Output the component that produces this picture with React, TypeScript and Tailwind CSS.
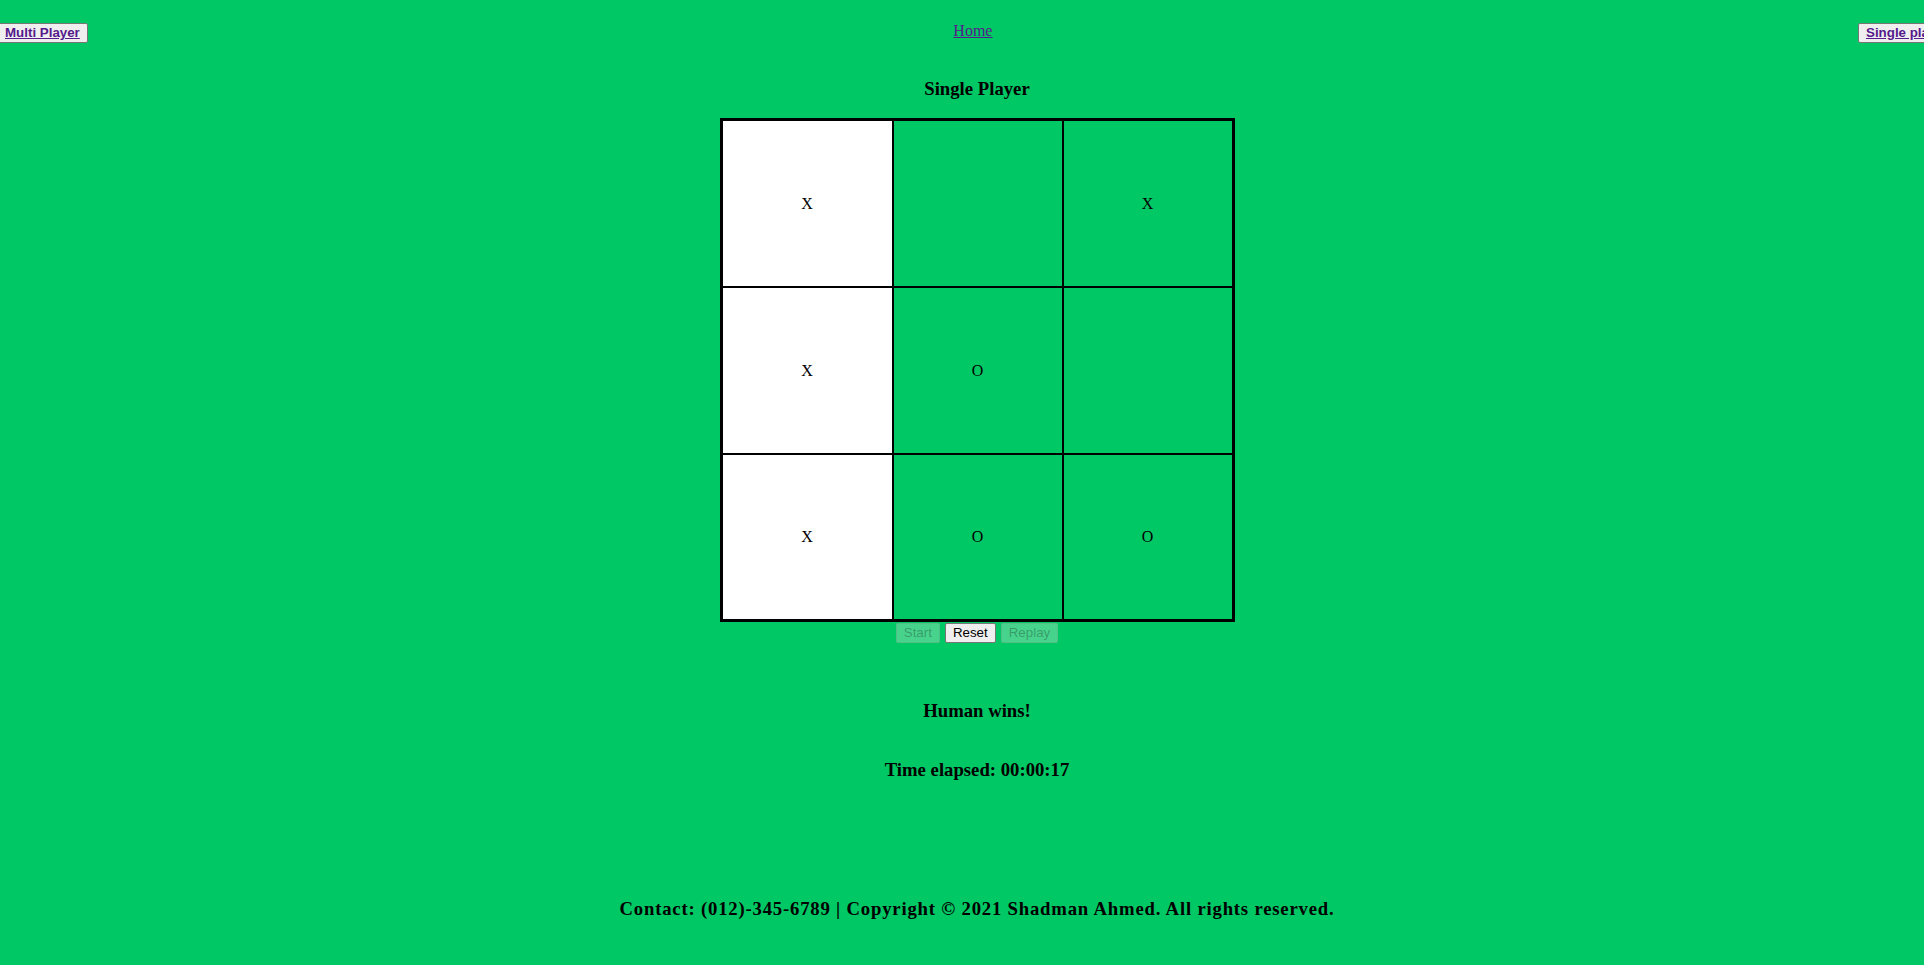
import React from 'react';

type Cell = { mark: string; win: boolean };

const board: Cell[] = [
  { mark: 'X', win: true },
  { mark: '', win: false },
  { mark: 'X', win: false },
  { mark: 'X', win: true },
  { mark: 'O', win: false },
  { mark: '', win: false },
  { mark: 'X', win: true },
  { mark: 'O', win: false },
  { mark: 'O', win: false },
];

const NavButton = ({ label }: { label: string }) => {
  return (
    <button className="h-[20px] px-[7px] border border-[#767676] bg-[#efefef] rounded-[2px] font-['Liberation_Sans',Arial,sans-serif] text-[13.33px] font-bold leading-none">
      <a href="#" className="text-[#551a8b] underline">
        {label}
      </a>
    </button>
  );
};

const GameButton = ({ label, disabled }: { label: string; disabled?: boolean }) => {
  return (
    <button
      disabled={disabled}
      className={
        disabled
          ? "h-[20px] px-[7px] border border-[#76767640] bg-[#efefef4d] rounded-[2px] font-['Liberation_Sans',Arial,sans-serif] text-[13.33px] leading-none text-[#1010104d]"
          : "h-[20px] px-[7px] border border-[#767676] bg-[#efefef] rounded-[2px] font-['Liberation_Sans',Arial,sans-serif] text-[13.33px] leading-none text-black"
      }
    >
      {label}
    </button>
  );
};

const App = () => {
  return (
    <div className="w-full h-screen overflow-hidden bg-[#00c864]">
      <div className="-ml-[3px] w-[1960px] min-h-[965px] pt-[23px] font-['Liberation_Serif','Times_New_Roman',serif] text-black">
        <div className="flex justify-between items-start">
          <NavButton label="Multi Player" />
          <a href="#" className="text-[16px] leading-[18px] -mt-[1px] text-[#551a8b] underline">
            Home
          </a>
          <NavButton label="Single player" />
        </div>

        <div className="flex flex-col items-center">
          <h3 className="mt-[35px] text-[18.72px] leading-[22px] font-bold">Single Player</h3>

          <div className="mt-[18px] grid grid-cols-[169px_168px_168px] grid-rows-[165px_165px_164px] gap-[2px] bg-black border-[3px] border-black">
            {board.map((cell, i) => (
              <div
                key={i}
                className={
                  cell.win
                    ? 'flex items-center justify-center bg-white text-[16px]'
                    : 'flex items-center justify-center bg-[#00c864] text-[16px]'
                }
              >
                {cell.mark}
              </div>
            ))}
          </div>

          <div className="mt-[1px] flex gap-[5px]">
            <GameButton label="Start" disabled />
            <GameButton label="Reset" />
            <GameButton label="Replay" disabled />
          </div>

          <h3 className="mt-[57px] text-[18.72px] leading-[22px] font-bold">Human wins!</h3>
          <h3 className="mt-[37px] text-[18.72px] leading-[22px] font-bold">Time elapsed: 00:00:17</h3>

          <h3 className="mt-[117px] text-[18.72px] leading-[22px] font-bold tracking-[0.8px]">
            Contact: (012)-345-6789 | Copyright © 2021 Shadman Ahmed. All rights reserved.
          </h3>
        </div>
      </div>
    </div>
  );
};

export default App;
